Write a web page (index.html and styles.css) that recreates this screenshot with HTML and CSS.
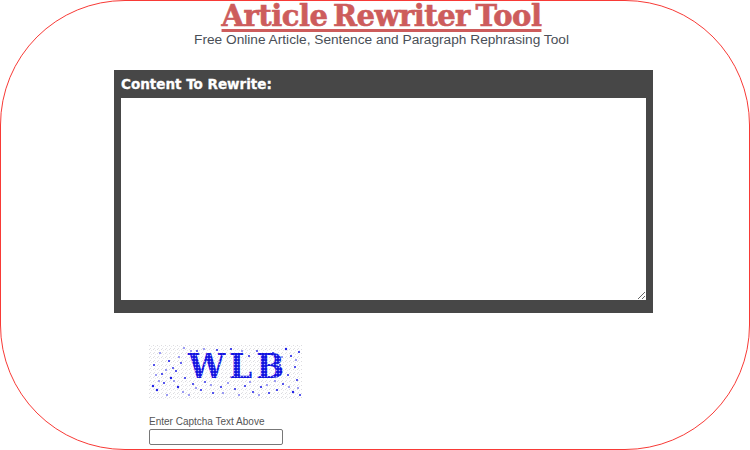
FILE: index.html
```html
<!DOCTYPE html>
<html lang="en">
<head>
    <meta charset="UTF-8">
    <meta name="viewport" content="width=device-width, initial-scale=1.0">
    <title>Article Rewriter Tool</title>
    <link rel="stylesheet" href="styles.css">
</head>
<body>
    <div class="frame">
        <div class="header">
            <h1>Article Rewriter Tool</h1>
            <p>Free Online Article, Sentence and Paragraph Rephrasing Tool</p>
        </div>

        <form class="rewrite-box">
            <label for="content">Content To Rewrite:</label>
            <textarea id="content" name="content"></textarea>
        </form>

        <div class="captcha">
            <svg class="captcha-img" width="153" height="54" viewBox="0 0 153 54">
                <defs>
                    <pattern id="speckle" width="4" height="4" patternUnits="userSpaceOnUse">
                        <rect width="4" height="4" fill="#fff"/>
                        <rect x="0" y="0" width="1" height="1" fill="#dcdce0"/>
                        <rect x="2" y="1" width="1" height="1" fill="#e8e8ec"/>
                        <rect x="1" y="3" width="1" height="1" fill="#e2e2e6"/>
                    </pattern>
                    <pattern id="letterfill" width="3" height="3" patternUnits="userSpaceOnUse">
                        <rect width="3" height="3" fill="#1212e0"/>
                        <circle cx="1.5" cy="1.5" r="0.8" fill="#a8a8f4"/>
                    </pattern>
                </defs>
                <rect width="153" height="54" fill="url(#speckle)"/>
                <text class="captcha-text" x="39" y="33" fill="url(#letterfill)">WLB</text>
                <g fill="#2020e8">
                    <circle cx="4" cy="41" r="1.2"/><circle cx="5" cy="20" r="1"/><circle cx="8" cy="45" r="1.2"/>
                    <circle cx="11" cy="8" r="0.8"/><circle cx="13" cy="29" r="1"/><circle cx="15" cy="38" r="1"/>
                    <circle cx="18" cy="50" r="0.8"/><circle cx="20" cy="16" r="1.1"/><circle cx="22" cy="33" r="1.2"/>
                    <circle cx="24" cy="23" r="0.9"/><circle cx="27" cy="26" r="1"/><circle cx="29" cy="42" r="1.2"/>
                    <circle cx="32" cy="18" r="0.9"/><circle cx="35" cy="3" r="0.8"/><circle cx="36" cy="33" r="1"/>
                    <circle cx="40" cy="50" r="0.8"/><circle cx="44" cy="39" r="1"/><circle cx="48" cy="6" r="0.9"/>
                    <circle cx="52" cy="45" r="1"/><circle cx="56" cy="37" r="0.9"/><circle cx="60" cy="10" r="0.8"/>
                    <circle cx="64" cy="48" r="1"/><circle cx="68" cy="5" r="1"/><circle cx="72" cy="42" r="1"/>
                    <circle cx="76" cy="9" r="0.9"/><circle cx="82" cy="4" r="1.1"/><circle cx="86" cy="44" r="1"/>
                    <circle cx="90" cy="50" r="0.8"/><circle cx="96" cy="41" r="1"/><circle cx="100" cy="11" r="1"/>
                    <circle cx="104" cy="47" r="1"/><circle cx="108" cy="6" r="0.9"/><circle cx="112" cy="42" r="1.1"/>
                    <circle cx="116" cy="14" r="1"/><circle cx="120" cy="48" r="1"/><circle cx="124" cy="8" r="1"/>
                    <circle cx="128" cy="45" r="1.1"/><circle cx="131" cy="20" r="1"/><circle cx="134" cy="39" r="1"/>
                    <circle cx="137" cy="4" r="1.2"/><circle cx="139" cy="30" r="1"/><circle cx="142" cy="11" r="1.1"/>
                    <circle cx="144" cy="47" r="1.2"/><circle cx="146" cy="22" r="1"/><circle cx="148" cy="35" r="1"/>
                    <circle cx="150" cy="7" r="1.1"/><circle cx="151" cy="50" r="1"/>
                </g>
                <g fill="#7c7cf0">
                    <circle cx="7" cy="30" r="1"/><circle cx="10" cy="36" r="1"/><circle cx="17" cy="25" r="1"/>
                    <circle cx="25" cy="36" r="1"/><circle cx="30" cy="12" r="1"/><circle cx="34" cy="47" r="1"/>
                    <circle cx="42" cy="6" r="1"/><circle cx="47" cy="43" r="1"/><circle cx="55" cy="4" r="1"/>
                    <circle cx="62" cy="40" r="1"/><circle cx="74" cy="48" r="1"/><circle cx="79" cy="38" r="1"/>
                    <circle cx="93" cy="6" r="1"/><circle cx="101" cy="37" r="1"/><circle cx="110" cy="50" r="1"/>
                    <circle cx="118" cy="40" r="1"/><circle cx="126" cy="36" r="1"/><circle cx="133" cy="12" r="1"/>
                    <circle cx="140" cy="42" r="1"/><circle cx="147" cy="15" r="1"/><circle cx="149" cy="43" r="1"/>
                </g>
            </svg>
            <label class="captcha-label" for="captcha">Enter Captcha Text Above</label>
            <input class="captcha-input" type="text" id="captcha" name="captcha">
        </div>
    </div>
</body>
</html>
```

FILE: styles.css
```css
html, body {
    margin: 0;
    padding: 0;
    background-color: #fff;
}
.frame {
    box-sizing: border-box;
    width: 750px;
    height: 450px;
    border: 1px solid #f83a36;
    border-radius: 125px;
    overflow: hidden;
    font-family: "Liberation Sans", Arial, sans-serif;
}
.header {
    text-align: center;
    margin-left: 13px;
}
h1 {
    margin: 0;
    font-family: "DejaVu Serif", serif;
    font-size: 29px;
    font-weight: bold;
    line-height: 30px;
    letter-spacing: -0.5px;
    word-spacing: -4px;
    color: #cd5c5c;
    -webkit-text-stroke: 0.6px #cd5c5c;
    text-decoration: underline;
    text-decoration-thickness: 3px;
    text-underline-offset: 3px;
}
.header p {
    margin: 0;
    font-size: 13.7px;
    line-height: 17px;
    color: #4a4f57;
}
.rewrite-box {
    box-sizing: border-box;
    display: flex;
    flex-direction: column;
    width: 539px;
    height: 243px;
    margin: 22px 0 0 113px;
    padding: 5px 7px;
    background-color: #474747;
}
.rewrite-box label {
    height: 23px;
    font-family: "DejaVu Sans", sans-serif;
    font-size: 13.5px;
    font-weight: bold;
    line-height: 18px;
    color: #fff;
    -webkit-text-stroke: 0.3px #fff;
}
.rewrite-box textarea {
    box-sizing: border-box;
    width: 525px;
    height: 202px;
    margin: 0;
    padding: 2px;
    border: none;
    background-color: #fff;
}
.captcha {
    display: flex;
    flex-direction: column;
    align-items: flex-start;
    margin: 32px 0 0 148px;
}
.captcha-img {
    display: block;
}
.captcha-text {
    font-family: "DejaVu Serif", serif;
    font-size: 33px;
    font-weight: bold;
    letter-spacing: 4px;
}
.captcha-label {
    margin-top: 17px;
    font-size: 10px;
    line-height: 12px;
    color: #555;
}
.captcha-input {
    box-sizing: border-box;
    width: 134px;
    height: 16px;
    margin: 1px 0 0;
    padding: 0 2px;
    border: 1px solid #777;
    border-radius: 2px;
}
```
